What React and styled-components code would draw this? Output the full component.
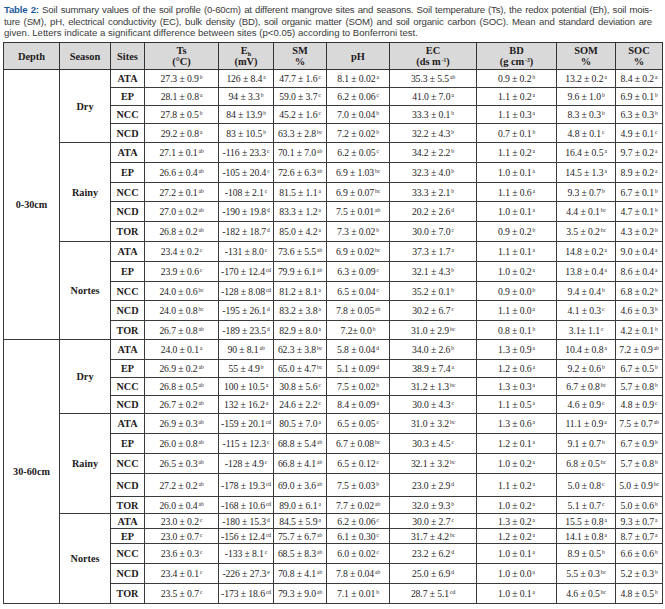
import React from 'react';
import styled, { createGlobalStyle } from 'styled-components';

const GlobalStyle = createGlobalStyle`
  html, body {
    margin: 0;
    padding: 0;
    background: #ffffff;
  }
`;

const Page = styled.div`
  width: 665px;
  padding: 4px 0 0 3px;
  box-sizing: border-box;
`;

const Caption = styled.div`
  width: 648px;
  margin: 0 0 3px 1px;
  font-family: 'Liberation Sans Narrow', 'Arial Narrow', 'Liberation Sans', Arial, sans-serif;
  font-stretch: condensed;
  font-size: 9.6px;
  line-height: 11.7px;
  color: #3a3a3a;
`;

const CaptionLine = styled.div`
  white-space: nowrap;
  letter-spacing: ${(p) => p.$spacing}px;
  text-align: ${(p) => (p.$justify ? 'justify' : 'left')};
  text-align-last: ${(p) => (p.$justify ? 'justify' : 'left')};
`;

const CaptionLabel = styled.strong`
  color: #1d5a9c;
  font-weight: bold;
`;

const Table = styled.table`
  width: 659px;
  table-layout: fixed;
  border-collapse: collapse;
  border: 1px solid #333333;
  font-family: 'Liberation Serif', 'Times New Roman', serif;
  font-size: 9.7px;
  color: #1e1b1c;
`;

const Col = styled.col`
  width: ${(p) => p.$w}px;
`;

const HeadRow = styled.tr`
  height: 27px;
  background: #d9d9d9;
`;

const HeadCell = styled.th`
  padding: 0;
  border: 1px solid #333333;
  font-weight: bold;
  font-size: 10.4px;
  line-height: 11px;
  text-align: center;
  vertical-align: middle;
`;

const Row = styled.tr`
  height: ${(p) => p.$h}px;
`;

const Cell = styled.td`
  padding: 0;
  border: 1px solid #3a3a3a;
  text-align: center;
  vertical-align: middle;
  line-height: 11px;
  letter-spacing: -0.1px;
  white-space: nowrap;
`;

const LabelCell = styled(Cell)`
  font-weight: bold;
  font-size: 10.2px;
  letter-spacing: 0;
`;

const Sup = styled.sup`
  font-size: 5.5px;
  line-height: 0;
  vertical-align: 3px;
  margin-left: 1px;
`;

const Sub = styled.sub`
  font-size: 6px;
  line-height: 0;
  vertical-align: -2px;
`;

const widths = [56, 51, 34, 74, 55, 53, 63, 87, 80, 59, 47];

const data = [
  {
    depth: '0-30cm',
    seasons: [
      {
        name: 'Dry',
        heights: [18, 18, 18, 19],
        rows: [
          ['ATA', '27.3 ± 0.9^b', '126 ± 8.4^a', '47.7 ± 1.6^c', '8.1 ± 0.02^a', '35.3 ± 5.5^ab', '0.9 ± 0.2^b', '13.2 ± 0.2^a', '8.4 ± 0.2^a'],
          ['EP', '28.1 ± 0.8^a', '94 ± 3.3^b', '59.0 ± 3.7^c', '6.2 ± 0.06^c', '41.0 ± 7.0^a', '1.1 ± 0.2^a', '9.6 ± 1.0^b', '6.9 ± 0.1^b'],
          ['NCC', '27.8 ± 0.5^b', '84 ± 13.9^b', '45.2 ± 1.6^c', '7.0 ± 0.04^b', '33.3 ± 0.1^b', '1.1 ± 0.3^a', '8.3 ± 0.3^b', '6.3 ± 0.3^b'],
          ['NCD', '29.2 ± 0.8^a', '83 ± 10.5^b', '63.3 ± 2.8^bc', '7.2 ± 0.02^b', '32.2 ± 4.3^b', '0.7 ± 0.1^b', '4.8 ± 0.1^c', '4.9 ± 0.1^c'],
        ],
      },
      {
        name: 'Rainy',
        heights: [20, 20, 19, 20, 20],
        rows: [
          ['ATA', '27.1 ± 0.1^ab', '-116 ± 23.3^c', '70.1 ± 7.0^ab', '6.2 ± 0.05^c', '34.2 ± 2.2^b', '1.1 ± 0.2^a', '16.4 ± 0.5^a', '9.7 ± 0.2^a'],
          ['EP', '26.6 ± 0.4^ab', '-105 ± 20.4^c', '72.6 ± 6.3^ab', '6.9 ± 1.03^bc', '32.3 ± 4.0^b', '1.0 ± 0.1^a', '14.5 ± 1.3^a', '8.9 ± 0.2^a'],
          ['NCC', '27.2 ± 0.1^ab', '-108 ± 2.1^c', '81.5 ± 1.1^a', '6.9 ± 0.07^bc', '33.3 ± 2.1^b', '1.1 ± 0.6^a', '9.3 ± 0.7^b', '6.7 ± 0.1^b'],
          ['NCD', '27.0 ± 0.2^ab', '-190 ± 19.8^d', '83.3 ± 1.2^a', '7.5 ± 0.01^ab', '20.2 ± 2.6^d', '1.0 ± 0.1^a', '4.4 ± 0.1^bc', '4.7 ± 0.1^b'],
          ['TOR', '26.8 ± 0.2^ab', '-182 ± 18.7^d', '85.0 ± 4.2^a', '7.3 ± 0.02^b', '30.0 ± 7.0^c', '0.9 ± 0.2^b', '3.5 ± 0.2^bc', '4.3 ± 0.2^b'],
        ],
      },
      {
        name: 'Nortes',
        heights: [20, 20, 19, 20, 19],
        rows: [
          ['ATA', '23.4 ± 0.2^c', '-131 ± 8.0^c', '73.6 ± 5.5^ab', '6.9 ± 0.02^bc', '37.3 ± 1.7^a', '1.1 ± 0.1^a', '14.8 ± 0.2^a', '9.0 ± 0.4^a'],
          ['EP', '23.9 ± 0.6^c', '-170 ± 12.4^cd', '79.9 ± 6.1^ab', '6.3 ± 0.09^c', '32.1 ± 4.3^b', '1.0 ± 0.2^a', '13.8 ± 0.4^a', '8.6 ± 0.4^a'],
          ['NCC', '24.0 ± 0.6^bc', '-128 ± 8.08^cd', '81.2 ± 8.1^a', '6.5 ± 0.04^c', '35.2 ± 0.1^b', '0.9 ± 0.0^b', '9.4 ± 0.4^b', '6.8 ± 0.2^b'],
          ['NCD', '24.0 ± 0.8^bc', '-195 ± 26.1^d', '83.2 ± 3.8^a', '7.8 ± 0.05^ab', '30.2 ± 6.7^c', '1.1 ± 0.0^a', '4.1 ± 0.3^c', '4.6 ± 0.3^b'],
          ['TOR', '26.7 ± 0.8^ab', '-189 ± 23.5^d', '82.9 ± 8.0^a', '7.2± 0.0^b', '31.0 ± 2.9^bc', '0.8 ± 0.1^b', '3.1± 1.1^c', '4.2 ± 0.1^b'],
        ],
      },
    ],
  },
  {
    depth: '30-60cm',
    seasons: [
      {
        name: 'Dry',
        heights: [20, 18, 18, 18],
        rows: [
          ['ATA', '24.0 ± 0.1^a', '90 ± 8.1^ab', '62.3 ± 3.8^bc', '5.8 ± 0.04^d', '34.0 ± 2.6^b', '1.3 ± 0.9^a', '10.4 ± 0.8^a', '7.2 ± 0.9^ab'],
          ['EP', '26.9 ± 0.2^ab', '55 ± 4.9^b', '65.0 ± 4.7^bc', '5.1 ± 0.09^d', '38.9 ± 7.4^a', '1.2 ± 0.6^a', '9.2 ± 0.6^b', '6.7 ± 0.5^b'],
          ['NCC', '26.8 ± 0.5^ab', '100 ± 10.5^a', '30.8 ± 5.6^c', '7.5 ± 0.02^b', '31.2 ± 1.3^bc', '1.3 ± 0.3^a', '6.7 ± 0.8^bc', '5.7 ± 0.8^b'],
          ['NCD', '26.7 ± 0.2^ab', '132 ± 16.2^a', '24.6 ± 2.2^c', '8.4 ± 0.09^a', '30.0 ± 4.3^c', '1.1 ± 0.5^a', '4.6 ± 0.9^c', '4.8 ± 0.9^c'],
        ],
      },
      {
        name: 'Rainy',
        heights: [20, 20, 20, 23, 17],
        rows: [
          ['ATA', '26.9 ± 0.3^ab', '-159 ± 20.1^cd', '80.5 ± 7.0^a', '6.5 ± 0.05^c', '31.0 ± 3.2^bc', '1.3 ± 0.6^a', '11.1 ± 0.9^a', '7.5 ± 0.7^ab'],
          ['EP', '26.0 ± 0.8^ab', '-115 ± 12.3^c', '68.8 ± 5.4^ab', '6.7 ± 0.08^bc', '30.3 ± 4.5^c', '1.2 ± 0.1^a', '9.1 ± 0.7^b', '6.7 ± 0.9^b'],
          ['NCC', '26.5 ± 0.3^ab', '-128 ± 4.9^c', '66.8 ± 4.1^ab', '6.5 ± 0.12^c', '32.1 ± 3.2^bc', '1.0 ± 0.2^a', '6.8 ± 0.5^bc', '5.7 ± 0.8^b'],
          ['NCD', '27.2 ± 0.2^ab', '-178 ± 19.3^cd', '69.0 ± 3.6^ab', '7.5 ± 0.03^b', '23.0 ± 2.9^d', '1.1 ± 0.2^a', '5.0 ± 0.8^c', '5.0 ± 0.9^bc'],
          ['TOR', '26.0 ± 0.4^ab', '-168 ± 10.6^cd', '89.0 ± 6.1^a', '7.7 ± 0.02^ab', '32.0 ± 9.3^b', '1.0 ± 0.2^a', '5.1 ± 0.7^c', '5.0 ± 0.6^b'],
        ],
      },
      {
        name: 'Nortes',
        heights: [15, 15, 20, 20, 20],
        rows: [
          ['ATA', '23.0 ± 0.2^c', '-180 ± 15.3^d', '84.5 ± 5.9^a', '6.2 ± 0.06^c', '30.0 ± 2.7^c', '1.3 ± 0.2^a', '15.5 ± 0.8^a', '9.3 ± 0.7^a'],
          ['EP', '23.0 ± 0.7^c', '-156 ± 12.4^cd', '75.7 ± 6.7^ab', '6.1 ± 0.30^c', '31.7 ± 4.2^bc', '1.2 ± 0.2^a', '14.1 ± 0.8^a', '8.7 ± 0.7^a'],
          ['NCC', '23.6 ± 0.3^c', '-133 ± 8.1^c', '68.5 ± 8.3^ab', '6.0 ± 0.02^c', '23.2 ± 6.2^d', '1.0 ± 0.1^a', '8.9 ± 0.5^b', '6.6 ± 0.6^b'],
          ['NCD', '23.4 ± 0.1^c', '-226 ± 27.3^e', '70.8 ± 4.1^ab', '7.8 ± 0.04^ab', '25.0 ± 6.9^d', '1.0 ± 0.0^a', '5.5 ± 0.3^bc', '5.2 ± 0.3^b'],
          ['TOR', '23.5 ± 0.7^c', '-173 ± 18.6^cd', '79.3 ± 9.0^ab', '7.1 ± 0.01^b', '28.7 ± 5.1^cd', '1.0 ± 0.1^a', '4.6 ± 0.5^bc', '4.8 ± 0.5^b'],
        ],
      },
    ],
  },
];

function Value({ text }) {
  const [main, letters] = text.split('^');
  return (
    <>
      {main}
      {letters && <Sup>{letters}</Sup>}
    </>
  );
}

function Header() {
  return (
    <thead>
      <HeadRow>
        <HeadCell>Depth</HeadCell>
        <HeadCell>Season</HeadCell>
        <HeadCell>Sites</HeadCell>
        <HeadCell>
          Ts
          <br />
          (°C)
        </HeadCell>
        <HeadCell>
          E<Sub>h</Sub>
          <br />
          (mV)
        </HeadCell>
        <HeadCell>
          SM
          <br />%
        </HeadCell>
        <HeadCell>pH</HeadCell>
        <HeadCell>
          EC
          <br />
          (ds m<Sup>-1</Sup>)
        </HeadCell>
        <HeadCell>
          BD
          <br />
          (g cm<Sup>-3</Sup>)
        </HeadCell>
        <HeadCell>
          SOM
          <br />%
        </HeadCell>
        <HeadCell>
          SOC
          <br />%
        </HeadCell>
      </HeadRow>
    </thead>
  );
}

export default function App() {
  return (
    <Page>
      <GlobalStyle />
      <Caption>
        <CaptionLine $justify $spacing={-0.18}>
          <CaptionLabel>Table 2:</CaptionLabel> Soil summary values of the soil profile (0-60cm) at different
          mangrove sites and seasons. Soil temperature (Ts), the redox potential (Eh), soil mois-
        </CaptionLine>
        <CaptionLine $justify $spacing={-0.18}>
          ture (SM), pH, electrical conductivity (EC), bulk density (BD), soil organic matter (SOM) and soil organic
          carbon (SOC). Mean and standard deviation are
        </CaptionLine>
        <CaptionLine $spacing={0}>
          given. Letters indicate a significant difference between sites (p&lt;0.05) according to Bonferroni test.
        </CaptionLine>
      </Caption>
      <Table>
        <colgroup>
          {widths.map((w, i) => (
            <Col key={i} $w={w} />
          ))}
        </colgroup>
        <Header />
        <tbody>
          {data.map((group) => {
            const depthSpan = group.seasons.reduce((n, s) => n + s.rows.length, 0);
            return group.seasons.map((season, si) =>
              season.rows.map((row, ri) => (
                <Row key={group.depth + season.name + row[0]} $h={season.heights[ri]}>
                  {si === 0 && ri === 0 && <LabelCell rowSpan={depthSpan}>{group.depth}</LabelCell>}
                  {ri === 0 && <LabelCell rowSpan={season.rows.length}>{season.name}</LabelCell>}
                  <LabelCell>{row[0]}</LabelCell>
                  {row.slice(1).map((v, vi) => (
                    <Cell key={vi}>
                      <Value text={v} />
                    </Cell>
                  ))}
                </Row>
              ))
            );
          })}
        </tbody>
      </Table>
    </Page>
  );
}
